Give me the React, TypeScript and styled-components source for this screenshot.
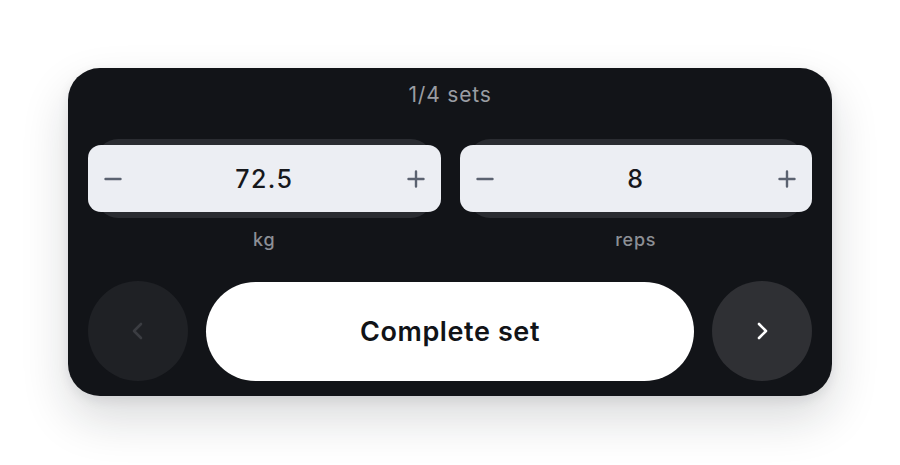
import React from "react";
import styled, { createGlobalStyle } from "styled-components";

const Global = createGlobalStyle`
  html, body { margin: 0; padding: 0; background: #ffffff; }
  body { font-family: Inter, "Noto Sans", sans-serif; -webkit-font-smoothing: antialiased; }
`;

const Page = styled.div`
  width: 900px;
  height: 465px;
  display: flex;
  align-items: flex-start;
  justify-content: center;
  padding-top: 68px;
  box-sizing: border-box;
`;

const Card = styled.div`
  width: 764px;
  height: 328px;
  box-sizing: border-box;
  background: #121418;
  border-radius: 32px;
  padding: 13px 20px 16px;
  display: flex;
  flex-direction: column;
  box-shadow: 0 22px 48px rgba(20, 24, 32, 0.16), 0 4px 12px rgba(20, 24, 32, 0.08);
`;

const Progress = styled.div`
  text-align: center;
  color: #9a9da3;
  font-size: 21px;
  line-height: 28px;
  font-weight: 400;
  letter-spacing: 0.8px;
`;

const Steppers = styled.div`
  display: grid;
  grid-template-columns: 1fr 1fr;
  gap: 19px;
  margin-top: 36px;
`;

const Field = styled.div`
  display: flex;
  flex-direction: column;
  align-items: stretch;
`;

const StepperWrap = styled.div`
  position: relative;
  z-index: 0;
`;

const Stepper = styled.div`
  position: relative;
  height: 67px;
  background: #eceef3;
  border-radius: 13px;
  display: flex;
  align-items: center;
  justify-content: space-between;
  padding: 0 14px;
  box-sizing: border-box;

  &::before {
    content: "";
    position: absolute;
    top: -6px;
    bottom: -6px;
    left: 8px;
    right: 8px;
    border-radius: 22px;
    background: #2a2c31;
    z-index: -1;
  }
`;

const StepBtn = styled.button`
  width: 22px;
  height: 22px;
  padding: 0;
  border: 0;
  background: transparent;
  display: flex;
  align-items: center;
  justify-content: center;
  color: #5b6270;
`;

const Value = styled.div`
  font-size: 25px;
  font-weight: 500;
  color: #16181c;
  letter-spacing: 1.4px;
`;

const Unit = styled.div`
  margin-top: 16px;
  text-align: center;
  color: #8c8f95;
  font-size: 18px;
  line-height: 24px;
  font-weight: 500;
  letter-spacing: 0.8px;
`;

const Actions = styled.div`
  display: flex;
  align-items: center;
  gap: 18px;
  margin-top: 29px;
`;

const Circle = styled.button<{ $active?: boolean }>`
  flex: 0 0 100px;
  width: 100px;
  height: 100px;
  border-radius: 50%;
  border: 0;
  padding: 0;
  display: flex;
  align-items: center;
  justify-content: center;
  background: ${(p) => (p.$active ? "#2f3034" : "#1f2125")};
  color: ${(p) => (p.$active ? "#ffffff" : "#3b3d42")};
`;

const Primary = styled.button`
  flex: 1;
  height: 99px;
  border: 0;
  border-radius: 50px;
  background: #ffffff;
  color: #111317;
  font-family: Inter, "Noto Sans", sans-serif;
  font-size: 27px;
  font-weight: 600;
  letter-spacing: 0.6px;
`;

const Minus = () => (
  <svg width="18" height="18" viewBox="0 0 18 18">
    <path d="M1.5 9h15" stroke="currentColor" strokeWidth="2.4" strokeLinecap="round" />
  </svg>
);

const Plus = () => (
  <svg width="18" height="18" viewBox="0 0 18 18">
    <path d="M1.5 9h15M9 1.5v15" stroke="currentColor" strokeWidth="2.4" strokeLinecap="round" />
  </svg>
);

const Chevron = ({ dir }: { dir: "left" | "right" }) => (
  <svg width="24" height="24" viewBox="0 0 24 24" fill="none">
    <path
      d={dir === "left" ? "M15 5l-7 7 7 7" : "M9 5l7 7-7 7"}
      stroke="currentColor"
      strokeWidth="2.6"
      strokeLinecap="round"
      strokeLinejoin="round"
    />
  </svg>
);

const StepperField = ({ value, unit }: { value: string; unit: string }) => (
  <Field>
    <StepperWrap>
      <Stepper>
        <StepBtn aria-label="decrease">
          <Minus />
        </StepBtn>
        <Value>{value}</Value>
        <StepBtn aria-label="increase">
          <Plus />
        </StepBtn>
      </Stepper>
    </StepperWrap>
    <Unit>{unit}</Unit>
  </Field>
);

export default function App() {
  return (
    <>
      <Global />
      <Page>
        <Card>
          <Progress>1/4 sets</Progress>
          <Steppers>
            <StepperField value="72.5" unit="kg" />
            <StepperField value="8" unit="reps" />
          </Steppers>
          <Actions>
            <Circle aria-label="previous">
              <Chevron dir="left" />
            </Circle>
            <Primary>Complete set</Primary>
            <Circle $active aria-label="next">
              <Chevron dir="right" />
            </Circle>
          </Actions>
        </Card>
      </Page>
    </>
  );
}
